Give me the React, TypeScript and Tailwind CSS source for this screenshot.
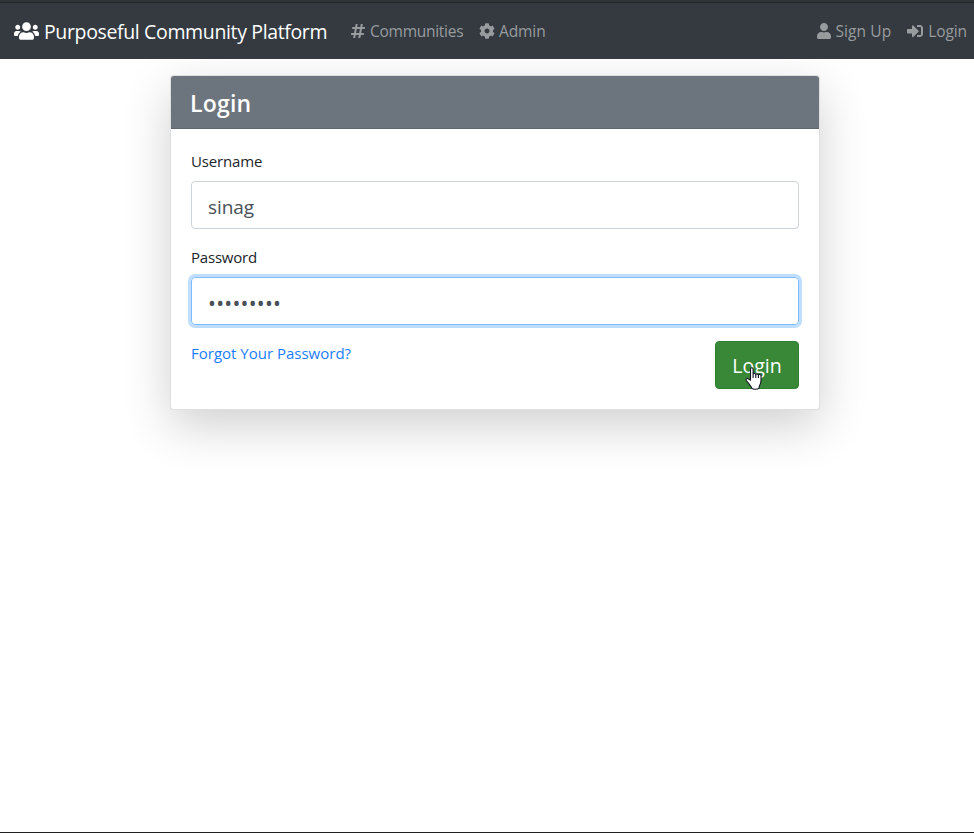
import { FaUsers, FaHashtag, FaCog, FaUser, FaSignInAlt } from "react-icons/fa";

function PointerCursor() {
  return (
    <svg className="absolute left-[29px] top-[24px] h-[25px] w-[18px]" viewBox="0 0 18 25">
      <path
        d="M5.500 14V3.200c0-2 2.600-2 2.600 0v4.900c.4-1 2.500-.9 2.700.3.5-.8 2.300-.7 2.600.5.6-.7 2.500-.5 2.600.9v4.700c0 2.300-.7 3.700-1.300 4.800-.4.900-.7 1.500-.7 2.900-1.500 1.400-5.800 1.400-7.300 0-.3-1.500-1.200-2.200-2.100-3.500L1.300 14.500c-.8-1.800 1.100-2.700 2.200-1.500z"
        fill="#fff"
        stroke="#141425"
        strokeWidth="1.1"
      />
      <path d="M8.100 8v4M10.800 8.500v3.500M13.400 9v3" stroke="#141425" strokeWidth="1.100" />
    </svg>
  );
}

export default function App() {
  return (
    <div className="flex h-[833px] flex-col overflow-hidden border-b border-[#202020] bg-white font-['Open_Sans','Noto_Sans',sans-serif] text-[15px] text-[#212529]">
      <nav className="relative z-10 flex h-[59px] shrink-0 items-center border-t-2 border-[#333437] bg-[#343a40] pl-[14px] pr-[7px] pt-px text-[15.5px] text-[#999c9f] shadow-[inset_0_1px_0_#242626]">
        <a className="flex items-center text-white">
          <FaUsers className="h-5 w-[25px]" />
          <span className="ml-[5px] w-[284px] whitespace-nowrap pt-px text-[19.5px] tracking-[-0.36px]">Purposeful Community Platform</span>
        </a>
        <a className="ml-[23px] flex w-[128px] items-center">
          <FaHashtag className="h-4 w-[14px]" />
          <span className="ml-[5px] pt-[2px] tracking-[-0.27px]">Communities</span>
        </a>
        <a className="flex items-center">
          <FaCog className="size-4" />
          <span className="ml-1 pt-[2px] tracking-[-0.1px]">Admin</span>
        </a>
        <a className="ml-auto flex items-center">
          <FaUser className="h-4 w-[14px]" />
          <span className="ml-1 pt-[2px] tracking-[0.1px]">Sign Up</span>
        </a>
        <a className="ml-4 flex items-center">
          <FaSignInAlt className="size-4" />
          <span className="ml-[5px] pt-[2px] tracking-[-0.1px]">Login</span>
        </a>
      </nav>

      <main className="ml-[170px] mt-4 flex h-[335px] w-[650px] flex-col rounded border border-black/[0.125] bg-white bg-clip-border shadow-[0_16px_48px_rgba(0,0,0,0.19)]">
        <h1 className="flex h-[53px] shrink-0 items-center rounded-t-[3px] border-b border-[#5f666c] bg-[#6c757d] px-[19px] pt-[2px] text-[23px] font-semibold leading-none tracking-[0.2px] text-white">
          Login
        </h1>
        <form className="flex flex-col px-5 pt-5">
          <label className="h-8 leading-6 tracking-[-0.15px]">Username</label>
          <div className="flex h-12 items-center rounded border border-[#ced4da] px-4 pt-1 text-[19px] tracking-[-0.1px] text-[#495057]">sinag</div>
          <label className="mt-4 h-8 leading-6 tracking-[-0.2px]">Password</label>
          <div className="flex h-12 items-center rounded border border-[#80bdff] px-4 pt-[5px] text-[21px] tracking-[0.23px] text-[#495057] shadow-[0_0_0_3px_#bfdeff]">
            •••••••••
          </div>
          <div className="mt-4 flex items-start justify-between">
            <a className="leading-6 text-[#1a7dff]">Forgot Your Password?</a>
            <button type="button" className="relative flex h-12 w-[84px] items-center justify-center rounded border border-[#2f8132] bg-[#388838] pt-[2px] text-[19.5px] text-white">
              Login
              <PointerCursor />
            </button>
          </div>
        </form>
      </main>
    </div>
  );
}
